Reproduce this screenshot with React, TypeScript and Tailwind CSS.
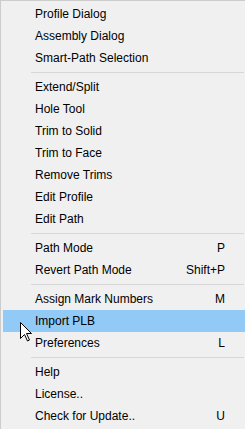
import React from 'react';

type Entry = { label: string; shortcut?: string; active?: boolean } | 'sep';

const entries: Entry[] = [
  { label: 'Profile Dialog' },
  { label: 'Assembly Dialog' },
  { label: 'Smart-Path Selection' },
  'sep',
  { label: 'Extend/Split' },
  { label: 'Hole Tool' },
  { label: 'Trim to Solid' },
  { label: 'Trim to Face' },
  { label: 'Remove Trims' },
  { label: 'Edit Profile' },
  { label: 'Edit Path' },
  'sep',
  { label: 'Path Mode', shortcut: 'P' },
  { label: 'Revert Path Mode', shortcut: 'Shift+P' },
  'sep',
  { label: 'Assign Mark Numbers', shortcut: 'M' },
  { label: 'Import PLB', active: true },
  { label: 'Preferences', shortcut: 'L' },
  'sep',
  { label: 'Help' },
  { label: 'License..' },
  { label: 'Check for Update..', shortcut: 'U' },
];

const Cursor: React.FC = () => (
  <svg
    className="absolute left-[18px] top-[320px]"
    width="14"
    height="22"
    viewBox="0 0 14 22"
  >
    <path
      d="M1.5 1.5 L1.5 17.5 L5.5 13.5 L8.5 20 L10.5 19 L7.5 12.5 L12.5 12.5 Z"
      fill="#ffffff"
      stroke="#000000"
      strokeWidth="1"
      strokeLinejoin="miter"
    />
  </svg>
);

const App: React.FC = () => {
  return (
    <div className="relative w-[245px] h-[429px] overflow-hidden bg-[#f0f0f0] border-t border-l border-[#cccccc] pt-[2px] font-['Segoe_UI','Liberation_Sans',sans-serif] text-[12px] text-black">
      {entries.map((e, idx) =>
        e === 'sep' ? (
          <div key={idx} className="h-[7px] flex items-center">
            <div className="ml-[30px] mr-[1px] h-px flex-1 bg-[#d7d7d7]" />
          </div>
        ) : (
          <div
            key={idx}
            className={
              'h-[22px] flex items-center ml-[2px] pl-[32px] pr-[20px] ' +
              (e.active ? 'bg-[#91c9f7]' : '')
            }
          >
            <span className="flex-1 leading-none">{e.label}</span>
            {e.shortcut && <span className="leading-none">{e.shortcut}</span>}
          </div>
        )
      )}
      <Cursor />
    </div>
  );
};

export default App;
